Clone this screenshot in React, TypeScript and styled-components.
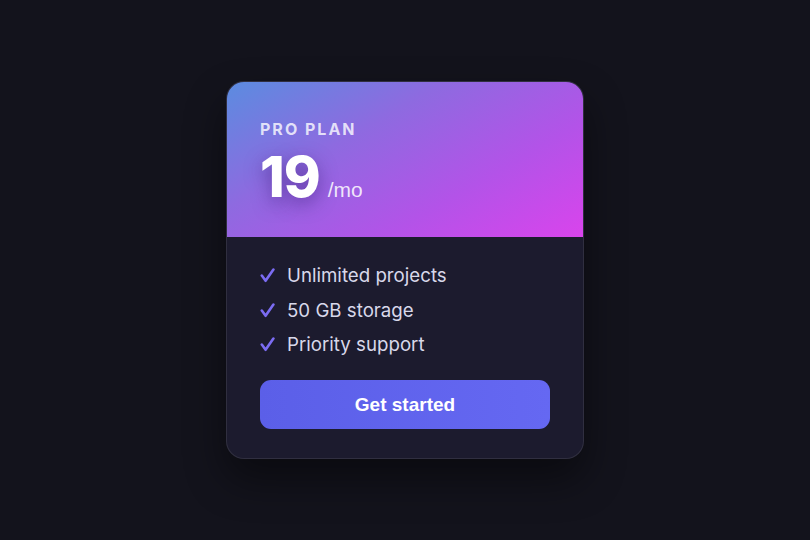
import React from 'react'
import styled, { createGlobalStyle } from 'styled-components'

const GlobalStyle = createGlobalStyle`
html, body {
  margin: 0;
  padding: 0;
  background: #13131c;
}
`;

const Page = styled.div`
width: 810px;
height: 540px;
display: flex;
align-items: center;
justify-content: center;
font-family: Inter, "Noto Sans", sans-serif;
`;

const Card = styled.div`
box-sizing: border-box;
width: 358px;
height: 378px;
border-radius: 18px;
overflow: hidden;
background: #1c1b2e;
border: 1px solid rgba(255, 255, 255, 0.09);
box-shadow: 0 20px 40px rgba(0, 0, 0, 0.45);
display: flex;
flex-direction: column;
`;

const Header = styled.div`
box-sizing: border-box;
height: 155px;
padding: 38px 33px 0;
background: linear-gradient(150deg, #5b8ce0 0%, #8e6ae0 35%, #b353e8 68%, #d944ec 100%);
`;

const PlanName = styled.div`
font-size: 16px;
font-weight: 700;
letter-spacing: 2px;
line-height: 18px;
color: rgba(255, 255, 255, 0.78);
`;

const PriceRow = styled.div`
display: flex;
align-items: baseline;
gap: 8px;
margin-top: 9px;
`;

const Price = styled.span`
font-size: 56px;
font-weight: 800;
line-height: 60px;
letter-spacing: -1px;
color: #ffffff;
text-shadow: 0 6px 18px rgba(60, 30, 120, 0.55);
`;

const Period = styled.span`
font-family: "Liberation Sans", Arial, sans-serif;
font-size: 21px;
color: rgba(255, 255, 255, 0.85);
`;

const Body = styled.div`
flex: 1;
padding: 25px 33px 0;
display: flex;
flex-direction: column;
`;

const FeatureList = styled.ul`
list-style: none;
margin: 0;
padding: 0;
display: flex;
flex-direction: column;
gap: 7.5px;
`;

const Feature = styled.li`
display: flex;
align-items: center;
gap: 12px;
font-size: 18.7px;
line-height: 27px;
color: #d8d8ea;
`;

const Check = styled.svg`
flex: none;
width: 15px;
height: 15px;
`;

const Button = styled.button`
margin-top: 22px;
height: 49px;
width: 100%;
border: none;
border-radius: 11px;
background: linear-gradient(90deg, #5b5fe8, #6568f2);
color: #ffffff;
font-family: "Liberation Sans", Arial, sans-serif;
font-size: 19px;
font-weight: 700;
cursor: pointer;
`;

const features = ['Unlimited projects', '50 GB storage', 'Priority support']

export default () => {
  return (
    <Page>
      <GlobalStyle />
      <Card>
        <Header>
          <PlanName>PRO PLAN</PlanName>
          <PriceRow>
            <Price>19</Price>
            <Period>/mo</Period>
          </PriceRow>
        </Header>
        <Body>
          <FeatureList>
            {features.map((f) => (
              <Feature key={f}>
                <Check viewBox="0 0 15 15">
                  <polyline
                    points="1.8,7.6 5.6,12.8 13.4,1.6"
                    fill="none"
                    stroke="#7b6cf2"
                    strokeWidth="2.6"
                    strokeLinecap="round"
                    strokeLinejoin="round"
                  />
                </Check>
                {f}
              </Feature>
            ))}
          </FeatureList>
          <Button>Get started</Button>
        </Body>
      </Card>
    </Page>
  )
}
